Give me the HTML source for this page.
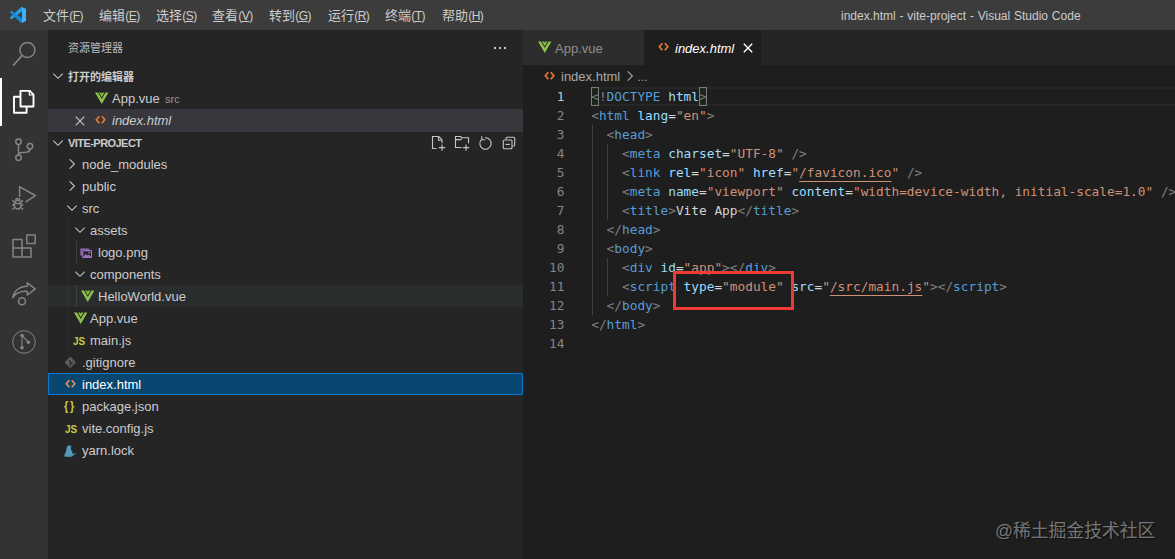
<!DOCTYPE html>
<html lang="zh-CN">
<head>
<meta charset="UTF-8">
<title>index.html - vite-project - Visual Studio Code</title>
<style>
*{box-sizing:border-box;margin:0;padding:0}
html,body{width:1175px;height:559px;overflow:hidden;background:#1e1e1e}
body{position:relative;font-family:"Liberation Sans","Noto Sans CJK SC",sans-serif;font-size:13px;color:#cccccc;-webkit-font-smoothing:antialiased}
.abs{position:absolute}
/* title bar */
#titlebar{position:absolute;left:0;top:0;width:1175px;height:30px;background:#3c3c3c}
#titlebar .menu{position:absolute;top:0;height:30px;line-height:31px;font-size:13px;color:#cccccc;white-space:nowrap}
#titlebar .mn{font-size:12px;letter-spacing:-0.6px;margin-left:0.3px}
#titlebar .mn u{text-underline-offset:1px}
#titlebar .title{position:absolute;top:0;height:30px;line-height:33px;word-spacing:0.5px;font-size:12px;color:#cccccc;white-space:nowrap;left:841px}
/* activity bar */
#activity{position:absolute;left:0;top:30px;width:48px;height:529px;background:#333333}
#activity .item{position:absolute;left:0;width:48px;height:48px}
#activity .item svg{position:absolute;left:12px;top:12px;width:24px;height:24px}
#activity .active{border-left:2px solid #ffffff}
/* sidebar */
#sidebar{position:absolute;left:48px;top:30px;width:475px;height:529px;background:#252526}
#sidebar .head{position:absolute;left:20px;top:0;height:35px;line-height:36px;font-size:11px;color:#bbbbbb}
.sec{position:absolute;left:0;width:475px;height:22px;line-height:24px;font-size:11px;font-weight:bold;color:#cccccc}
.sec span{position:absolute;left:20px;top:0}
.row{position:absolute;left:0;width:475px;height:22px;line-height:24px;font-size:13px;color:#cccccc;white-space:nowrap}
.row .lbl{position:absolute;top:0}
.row svg{position:absolute;margin-top:1px}
.chev{position:absolute;width:16px;height:16px;top:3px}
.row svg.chev{margin-top:0}
.guide{position:absolute;width:1px;background:#585858}
/* editor */
#tabs{position:absolute;left:523px;top:30px;width:652px;height:35px;background:#252526}
.tab{position:absolute;top:0;height:35px;line-height:37px;font-size:13px;white-space:nowrap}
#crumbs{position:absolute;left:523px;top:65px;width:652px;height:22px;line-height:24px;font-size:13px;color:#a9a9a9;background:#1e1e1e}
#code{position:absolute;left:523px;top:87px;width:652px;height:472px;background:#1e1e1e;font-family:"DejaVu Sans Mono","Liberation Mono",monospace;font-size:12.8px;letter-spacing:-0.006px}
.ln{position:absolute;left:0;width:41.5px;height:19px;line-height:19px;text-align:right;color:#858585}
.cl{position:absolute;left:68.2px;height:19px;line-height:19px;white-space:pre;color:#d4d4d4}
.b{color:#808080}.t{color:#569cd6}.a{color:#9cdcfe}.s{color:#ce9178}.u{text-decoration:underline;text-underline-offset:3.7px;text-decoration-thickness:1px;text-decoration-skip-ink:none}
.ig{position:absolute;width:1px;background:#404040}
#wm{position:absolute;left:995px;top:517px;font-size:17.8px;line-height:28px;color:rgba(255,255,255,0.42);white-space:nowrap;font-family:"Liberation Sans","Noto Sans CJK SC",sans-serif;text-shadow:1px 1px 1px rgba(0,0,0,0.55)}
</style>
</head>
<body>
<div id="titlebar">
  <svg class="abs" style="left:10px;top:7px;width:16px;height:16px" viewBox="0 0 100 100"><path fill="#2aa0ea" d="M96.5 10.8 75.9.9a6.2 6.2 0 0 0-7.1 1.2L1.3 63.6a4.2 4.2 0 0 0 0 6.2l5.5 5a4.2 4.2 0 0 0 5.3.2L93.300 13.4c2.700-2.100 6.700-.100 6.700 3.300v-.300a6.300 6.300 0 0 0-3.500-5.600z"/><path fill="#1888d6" d="M96.5 89.200 75.900 99.100a6.200 6.200 0 0 1-7.100-1.200L1.300 36.400a4.200 4.200 0 0 1 0-6.200l5.500-5a4.200 4.200 0 0 1 5.300-.200L93.300 86.600c2.700 2.100 6.700.1 6.700-3.300v.3a6.300 6.300 0 0 1-3.500 5.600z"/><path fill="#3db0f6" d="M75.900 99.100a6.200 6.200 0 0 1-7.100-1.200c2.300 2.300 6.200.7 6.200-2.600V4.700c0-3.300-3.900-4.900-6.200-2.600A6.200 6.200 0 0 1 75.900.9l20.600 9.900a6.200 6.200 0 0 1 3.500 5.600v67.200a6.200 6.200 0 0 1-3.500 5.600z"/></svg>
  <div class="menu" style="left:43px">文件<span class="mn">(<u>F</u>)</span></div>
  <div class="menu" style="left:99px">编辑<span class="mn">(<u>E</u>)</span></div>
  <div class="menu" style="left:156px">选择<span class="mn">(<u>S</u>)</span></div>
  <div class="menu" style="left:212px">查看<span class="mn">(<u>V</u>)</span></div>
  <div class="menu" style="left:269px">转到<span class="mn">(<u>G</u>)</span></div>
  <div class="menu" style="left:328px">运行<span class="mn">(<u>R</u>)</span></div>
  <div class="menu" style="left:385px">终端<span class="mn">(<u>T</u>)</span></div>
  <div class="menu" style="left:442px">帮助<span class="mn">(<u>H</u>)</span></div>
  <div class="title">index.html - vite-project - Visual Studio Code</div>
</div>

<div id="activity">
  <div class="item" style="top:0"><svg viewBox="0 0 24 24"><circle cx="15.400" cy="8" r="7.500" fill="none" stroke="#858585" stroke-width="1.500"/><path d="M10.200 13.400 1.200 23.600" stroke="#858585" stroke-width="1.600" fill="none"/></svg></div>
  <div class="item active" style="top:48px"><svg style="left:10px" viewBox="0 0 24 24"><path d="M8.500 0.800h9.200l3.800 3.800v11.900h-13z" fill="none" stroke="#ffffff" stroke-width="1.900" stroke-linejoin="round"/><path d="M17.300 1v4h4" fill="none" stroke="#ffffff" stroke-width="1.200"/><path d="M8.300 6.800H2v16h12.600v-6" fill="none" stroke="#ffffff" stroke-width="1.900" stroke-linejoin="round"/></svg></div>
  <div class="item" style="top:96px"><svg viewBox="0 0 24 24"><g fill="none" stroke="#858585" stroke-width="1.500"><circle cx="6.500" cy="3.800" r="2.700"/><circle cx="18" cy="8.200" r="2.700"/><circle cx="6.500" cy="19.700" r="2.700"/><path d="M6.500 6.500V17M18 10.900c0 3.600-4 3.600-8 3.600-2 0-3.500 0.500-3.500 2.400"/></g></svg></div>
  <div class="item" style="top:144px"><svg viewBox="0 0 24 24"><g fill="none" stroke="#858585" stroke-width="1.500"><path d="M7.600 11V0.800L23.400 9.600 13.500 16.200"/><ellipse cx="5.700" cy="18.600" rx="3.400" ry="4.400"/><path d="M2.300 17.500H9.100M0.300 14.300l2.400 1.900M11.100 14.300l-2.400 1.900M0 19h2.300M11.400 19H9.100M0.300 23.400l2.400-1.900M11.100 23.400l-2.400-1.900M3.700 14.500c0-2.600 4-2.600 4 0"/></g></svg></div>
  <div class="item" style="top:192px"><svg viewBox="0 0 24 24"><g fill="none" stroke="#858585" stroke-width="1.500" stroke-linejoin="round"><path d="M1 5.500h9V14h9v9H1zM1 14h9v9"/><rect x="14.800" y="1" width="8.400" height="8.400" rx="0.500"/></g></svg></div>
  <div class="item" style="top:240px"><svg viewBox="0 0 24 24"><g fill="none" stroke="#858585" stroke-width="1.500" stroke-linejoin="round"><path d="M15.300 0.800 23.200 6.800 15.300 13V9.400C8.500 9 3.500 11.500 0.800 15.600 1.800 9 7.500 4.300 15.300 4.300z"/><circle cx="10" cy="19.300" r="3.500"/></g></svg></div>
  <div class="item" style="top:288px"><svg viewBox="0 0 24 24"><circle cx="12" cy="12" r="11.300" fill="none" stroke="#858585" stroke-width="1"/><path d="M10 5.500v12.300M10 5.500l6.400 6.700" stroke="#858585" stroke-width="1.100" fill="none"/><circle cx="10" cy="5.500" r="1.800" fill="#858585"/><circle cx="10" cy="17.800" r="1.800" fill="#858585"/><circle cx="16.400" cy="12.200" r="1.800" fill="#858585"/></svg></div>
</div>

<div id="sidebar">
  <div class="head">资源管理器</div>
  <div class="abs" style="left:446px;top:17px;width:2px;height:2px;background:#c5c5c5"></div><div class="abs" style="left:451px;top:17px;width:2px;height:2px;background:#c5c5c5"></div><div class="abs" style="left:456px;top:17px;width:2px;height:2px;background:#c5c5c5"></div>
  <div class="sec" style="top:35px"><svg class="chev" style="left:2px" viewBox="0 0 16 16"><path d="M3.3 5.6 8 10.3l4.7-4.7" fill="none" stroke="#c5c5c5" stroke-width="1.1"/></svg><span>打开的编辑器</span></div>
  <div class="row" style="top:57px"><svg style="left:47px;top:4px;width:13.5px;height:12.5px" viewBox="0 0 14 13"><path d="M0 0.500h3.100L7 7.300 10.900 0.500H14L7 12.600z" fill="#8dc149"/><path d="M4.300 0.500h2L7 1.900 7.700 0.500h2L7 5.400z" fill="#8dc149"/></svg><span class="lbl" style="left:64px">App.vue</span><span class="lbl" style="left:117px;font-size:11px;color:#969696">src</span></div>
  <div class="row" style="top:79px;background:#37373d"><svg style="left:24px;top:3px;width:16px;height:16px" viewBox="0 0 16 16"><path d="M3.700 3.700l8.600 8.600M12.300 3.700l-8.600 8.600" stroke="#c5c5c5" stroke-width="1.200" fill="none"/></svg><svg style="left:47.0px;top:5px;width:11.200px;height:9.500px" viewBox="0 0 11 10" preserveAspectRatio="none"><path d="M4.300 1.200 1.300 5l3 3.800M6.700 1.200 9.700 5 6.700 8.800" fill="none" stroke="#e37933" stroke-width="1.700"/></svg><span class="lbl" style="left:64px;font-style:italic">index.html</span></div>
  <div class="sec" style="top:101px;border-top:1px solid #3c3c3c;line-height:23px"><svg class="chev" style="left:2px" viewBox="0 0 16 16"><path d="M3.3 5.6 8 10.3l4.7-4.7" fill="none" stroke="#c5c5c5" stroke-width="1.1"/></svg><span style="letter-spacing:-0.55px">VITE-PROJECT</span><svg class="abs" style="left:381.500px;top:2.800px;width:16px;height:16px" viewBox="0 0 16 16"><g fill="none" stroke="#c5c5c5" stroke-width="1.100"><path d="M6.500 13.500h-4v-12h6.300l3.200 3.200V8.300M8.500 1.700v3.500H12"/><path d="M12 9.400v6.400M8.800 12.600h6.400"/></g></svg><svg class="abs" style="left:405.500px;top:2.800px;width:16px;height:16px" viewBox="0 0 16 16"><g fill="none" stroke="#c5c5c5" stroke-width="1.100"><path d="M7.500 12.500h-6v-11h5.200l1 1.200h6.800V8.300M1.500 4.600h5.200l1-1"/><path d="M12 9.400v6.400M8.800 12.600h6.400"/></g></svg><svg class="abs" style="left:429px;top:2.800px;width:16px;height:16px" viewBox="0 0 16 16"><g fill="none" stroke="#c5c5c5" stroke-width="1.100"><path d="M4.600 4.300A5.700 5.700 0 1 0 8 2.800"/><path d="M4.800 1.300v3.400h3.400" /></g></svg><svg class="abs" style="left:453px;top:2.800px;width:16px;height:16px" viewBox="0 0 16 16"><g fill="none" stroke="#c5c5c5" stroke-width="1.100"><path d="M5 4.500V3.300a1 1 0 0 1 1-1h6.700a1 1 0 0 1 1 1V10a1 1 0 0 1-1 1h-1.200"/><rect x="2.300" y="5" width="8.700" height="8.700" rx="1"/><path d="M4.500 9.400h4.400"/></g></svg></div>
  <div class="row" style="top:123px;"><svg class="chev" style="left:16px" viewBox="0 0 16 16"><path d="M5.7 3.3 10.4 8l-4.700 4.700" fill="none" stroke="#c5c5c5" stroke-width="1.100"/></svg><span class="lbl" style="left:34px">node_modules</span></div>
  <div class="row" style="top:145px;"><svg class="chev" style="left:16px" viewBox="0 0 16 16"><path d="M5.7 3.3 10.4 8l-4.700 4.700" fill="none" stroke="#c5c5c5" stroke-width="1.100"/></svg><span class="lbl" style="left:34px">public</span></div>
  <div class="row" style="top:167px;"><svg class="chev" style="left:15.5px" viewBox="0 0 16 16"><path d="M3.3 5.6 8 10.3l4.7-4.7" fill="none" stroke="#c5c5c5" stroke-width="1.1"/></svg><span class="lbl" style="left:34px">src</span></div>
  <div class="row" style="top:189px;"><svg class="chev" style="left:23.5px" viewBox="0 0 16 16"><path d="M3.3 5.6 8 10.3l4.7-4.7" fill="none" stroke="#c5c5c5" stroke-width="1.1"/></svg><span class="lbl" style="left:42px">assets</span></div>
  <div class="row" style="top:211px;"><svg style="left:31.500px;top:5.500px;width:12px;height:10.500px" viewBox="0 0 13 12" preserveAspectRatio="none"><path d="M0.500 0.600h9.500v1.400H2v6.500H0.500z" fill="#a074c4"/><rect x="3" y="3" width="9.500" height="8" rx="0.600" fill="none" stroke="#a074c4" stroke-width="1.300"/><path d="M3.600 10.400 6.300 6.800 8 8.600 9.400 7.400 12 10.400z" fill="#a074c4"/><circle cx="9.800" cy="5.300" r="0.900" fill="#a074c4"/></svg><span class="lbl" style="left:50px">logo.png</span></div>
  <div class="row" style="top:233px;"><svg class="chev" style="left:23.5px" viewBox="0 0 16 16"><path d="M3.3 5.6 8 10.3l4.7-4.7" fill="none" stroke="#c5c5c5" stroke-width="1.1"/></svg><span class="lbl" style="left:42px">components</span></div>
  <div class="row" style="top:255px;background:#2a2d2e"><svg style="left:32.800px;top:4px;width:13.5px;height:12.5px" viewBox="0 0 14 13"><path d="M0 0.500h3.100L7 7.300 10.900 0.500H14L7 12.600z" fill="#8dc149"/><path d="M4.300 0.500h2L7 1.900 7.700 0.500h2L7 5.400z" fill="#8dc149"/></svg><span class="lbl" style="left:50px">HelloWorld.vue</span></div>
  <div class="row" style="top:277px;"><svg style="left:25.5px;top:4px;width:13.5px;height:12.5px" viewBox="0 0 14 13"><path d="M0 0.500h3.100L7 7.300 10.900 0.500H14L7 12.600z" fill="#8dc149"/><path d="M4.300 0.500h2L7 1.900 7.700 0.500h2L7 5.400z" fill="#8dc149"/></svg><span class="lbl" style="left:42px">App.vue</span></div>
  <div class="row" style="top:299px;"><span class="abs" style="left:24.5px;top:0;font-size:11px;font-weight:bold;color:#cbcb41;line-height:24px;transform:scaleX(0.9);transform-origin:0 50%">JS</span><span class="lbl" style="left:42px">main.js</span></div>
  <div class="row" style="top:321px;"><svg style="left:15.700px;top:4.200px;width:12.600px;height:12.600px" viewBox="0 0 12 12"><rect x="2.100" y="2.100" width="7.800" height="7.800" rx="0.800" transform="rotate(45 6 6)" fill="#595d5f"/><path d="M4.600 3.700 7.300 6.400M6 5v3.400" stroke="#252526" stroke-width="0.900" fill="none"/><circle cx="6" cy="8.200" r="0.800" fill="#252526"/><circle cx="7.600" cy="6.600" r="0.800" fill="#252526"/></svg><span class="lbl" style="left:34px">.gitignore</span></div>
  <div class="row" style="top:343px;background:#094771;outline:1px solid #0a7aca;outline-offset:-1px"><svg style="left:16.5px;top:5px;width:11.200px;height:9.500px" viewBox="0 0 11 10" preserveAspectRatio="none"><path d="M4.300 1.200 1.300 5l3 3.800M6.700 1.200 9.700 5 6.700 8.800" fill="none" stroke="#e08a5e" stroke-width="1.700"/></svg><span class="lbl" style="left:34px;color:#ffffff">index.html</span></div>
  <div class="row" style="top:365px;"><span class="abs" style="left:16px;top:0;font-size:12px;font-weight:bold;color:#cbcb41;letter-spacing:2px;line-height:22px;transform:scaleX(0.9);transform-origin:0 50%">{}</span><span class="lbl" style="left:34px">package.json</span></div>
  <div class="row" style="top:387px;"><span class="abs" style="left:16.5px;top:0;font-size:11px;font-weight:bold;color:#cbcb41;line-height:24px;transform:scaleX(0.9);transform-origin:0 50%">JS</span><span class="lbl" style="left:34px">vite.config.js</span></div>
  <div class="row" style="top:409px;"><svg style="left:16px;top:5px;width:12px;height:12px" viewBox="0 0 12 12"><path d="M4.600 0.400C6 0 7.400 1 7.300 2.500 7.300 3.300 7 3.900 6.800 4.500 8 5.600 8.700 7.200 8.600 9.200 9.600 9.100 10.500 8.400 11.300 8.200c0.500-0.100 0.700 0.500 0.300 0.800C10.600 9.700 9.600 10.500 8.400 10.900 7.800 11.500 6.800 11.700 5.500 11.700H1.200C0.300 11.700 0.200 10.800 0.500 10.100 0.900 9 1.500 7.800 2 6.600 2.400 5.400 2.400 4.200 2.600 3 2.800 1.700 3.400 0.700 4.600 0.400z" fill="#519aba"/></svg><span class="lbl" style="left:34px">yarn.lock</span></div>
  <div class="guide" style="left:20px;top:189px;height:132px;opacity:.22"></div>
  <div class="guide" style="left:28px;top:211px;height:22px;opacity:.45"></div>
  <div class="guide" style="left:28px;top:255px;height:22px;opacity:.45"></div>
</div>

<div id="tabs">
  <div class="tab" style="left:0;width:121px;background:#2d2d2d;color:#8f8f8f"><svg class="abs" style="left:15px;top:11px;width:13.5px;height:12.5px" viewBox="0 0 14 13"><path d="M0 0.500h3.100L7 7.300 10.900 0.500H14L7 12.600z" fill="#8dc149"/><path d="M4.300 0.500h2L7 1.900 7.700 0.500h2L7 5.400z" fill="#8dc149"/></svg><span class="abs" style="left:32px;top:0">App.vue</span></div>
  <div class="tab" style="left:121px;width:117px;background:#1e1e1e;color:#ffffff"><svg class="abs" style="left:14.0px;top:12px;width:11.200px;height:9.500px" viewBox="0 0 11 10" preserveAspectRatio="none"><path d="M4.300 1.200 1.300 5l3 3.800M6.700 1.200 9.700 5 6.700 8.800" fill="none" stroke="#e37933" stroke-width="1.700"/></svg><span class="abs" style="left:31px;top:0;font-style:italic">index.html</span><svg class="abs" style="left:96px;top:10px;width:16px;height:16px" viewBox="0 0 16 16"><path d="M3.800 3.800l8.400 8.400M12.200 3.800l-8.400 8.400" stroke="#ffffff" stroke-width="1.400" fill="none"/></svg></div>
</div>
<div id="crumbs">
  <svg class="abs" style="left:20.5px;top:6.0px;width:11.200px;height:9.500px" viewBox="0 0 11 10" preserveAspectRatio="none"><path d="M4.300 1.200 1.300 5l3 3.800M6.700 1.200 9.700 5 6.700 8.800" fill="none" stroke="#e37933" stroke-width="1.700"/></svg><span class="abs" style="left:38px;top:0">index.html</span><svg class="abs" style="left:99px;top:3px;width:16px;height:16px" viewBox="0 0 16 16"><path d="M5.700 3.300 10.400 8l-4.700 4.700" fill="none" stroke="#a9a9a9" stroke-width="1.100"/></svg><span class="abs" style="left:114px;top:0;font-size:11px">…</span>
</div>
<div id="code">
  <div class="abs" style="left:68px;top:0;width:584px;height:19px;border-top:2px solid #262626;border-bottom:2px solid #262626"></div>
  <div class="ln" style="top:0px;color:#c6c6c6">1</div><div class="cl" style="top:0px"><span class="b">&lt;!</span><span class="t">DOCTYPE</span> <span class="a">html</span><span class="b">&gt;</span></div>
  <div class="ln" style="top:19px">2</div><div class="cl" style="top:19px"><span class="b">&lt;</span><span class="t">html</span> <span class="a">lang</span>=<span class="s">"en"</span><span class="b">&gt;</span></div>
  <div class="ln" style="top:38px">3</div><div class="cl" style="top:38px">  <span class="b">&lt;</span><span class="t">head</span><span class="b">&gt;</span></div>
  <div class="ln" style="top:57px">4</div><div class="cl" style="top:57px">    <span class="b">&lt;</span><span class="t">meta</span> <span class="a">charset</span>=<span class="s">"UTF-8"</span> <span class="b">/&gt;</span></div>
  <div class="ln" style="top:76px">5</div><div class="cl" style="top:76px">    <span class="b">&lt;</span><span class="t">link</span> <span class="a">rel</span>=<span class="s">"icon"</span> <span class="a">href</span>=<span class="s">"<span class="u">/favicon.ico</span>"</span> <span class="b">/&gt;</span></div>
  <div class="ln" style="top:95px">6</div><div class="cl" style="top:95px">    <span class="b">&lt;</span><span class="t">meta</span> <span class="a">name</span>=<span class="s">"viewport"</span> <span class="a">content</span>=<span class="s">"width=device-width, initial-scale=1.0"</span> <span class="b">/&gt;</span></div>
  <div class="ln" style="top:114px">7</div><div class="cl" style="top:114px">    <span class="b">&lt;</span><span class="t">title</span><span class="b">&gt;</span>Vite App<span class="b">&lt;/</span><span class="t">title</span><span class="b">&gt;</span></div>
  <div class="ln" style="top:133px">8</div><div class="cl" style="top:133px">  <span class="b">&lt;/</span><span class="t">head</span><span class="b">&gt;</span></div>
  <div class="ln" style="top:152px">9</div><div class="cl" style="top:152px">  <span class="b">&lt;</span><span class="t">body</span><span class="b">&gt;</span></div>
  <div class="ln" style="top:171px">10</div><div class="cl" style="top:171px">    <span class="b">&lt;</span><span class="t">div</span> <span class="a">id</span>=<span class="s">"app"</span><span class="b">&gt;</span><span class="b">&lt;/</span><span class="t">div</span><span class="b">&gt;</span></div>
  <div class="ln" style="top:190px">11</div><div class="cl" style="top:190px">    <span class="b">&lt;</span><span class="t">script</span> <span class="a">type</span>=<span class="s">"module"</span> <span class="a">src</span>=<span class="s">"<span class="u">/src/main.js</span>"</span><span class="b">&gt;</span><span class="b">&lt;/</span><span class="t">script</span><span class="b">&gt;</span></div>
  <div class="ln" style="top:209px">12</div><div class="cl" style="top:209px">  <span class="b">&lt;/</span><span class="t">body</span><span class="b">&gt;</span></div>
  <div class="ln" style="top:228px">13</div><div class="cl" style="top:228px"><span class="b">&lt;/</span><span class="t">html</span><span class="b">&gt;</span></div>
  <div class="ln" style="top:247px">14</div><div class="cl" style="top:247px"></div>
  <div class="ig" style="left:69px;top:38px;height:190px"></div>
  <div class="ig" style="left:83.900px;top:57px;height:76px"></div>
  <div class="ig" style="left:83.900px;top:171px;height:38px"></div>
  <div class="abs" style="left:68px;top:0px;width:8.200px;height:19px;border:1px solid #7c7c7c;background:rgba(0,100,0,0.1)"></div>
  <div class="abs" style="left:175.800px;top:0px;width:8.200px;height:19px;border:1px solid #7c7c7c;background:rgba(0,100,0,0.1)"></div>
  <div class="abs" style="left:150px;top:184px;width:121px;height:39px;border:3px solid #ee3b36"></div>
</div>
<div id="wm">@稀土掘金技术社区</div>
</body>
</html>
